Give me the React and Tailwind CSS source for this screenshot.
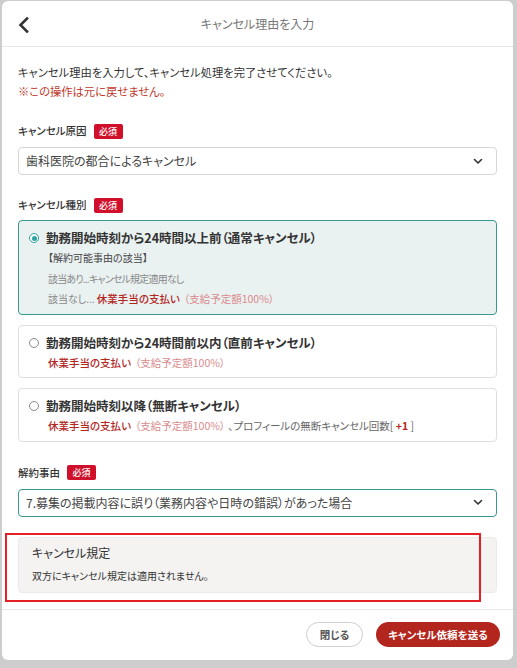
import React from "react";

const font = { fontFamily: '"Noto Sans CJK JP", "Noto Sans", sans-serif' };

function Badge() {
  return (
    <span className="ml-[7px] inline-flex h-[15px] w-[29px] items-center justify-center rounded-[2px] bg-[#d0102b] text-[9px] leading-none text-white">
      必須
    </span>
  );
}

function Label({ children }) {
  return (
    <div className="flex h-[20px] items-center text-[10.5px] font-medium leading-[20px] text-[#333]">
      <span>{children}</span>
      <Badge />
    </div>
  );
}

function Chevron() {
  return (
    <svg width="10" height="7" viewBox="0 0 10 7" className="shrink-0">
      <polyline points="1.5,1.5 5,5 8.5,1.5" fill="none" stroke="#333" strokeWidth="1.6" strokeLinecap="round" strokeLinejoin="round" />
    </svg>
  );
}

function Select({ value, active }) {
  return (
    <div
      className={
        "flex h-[28px] items-center justify-between rounded-[4px] border bg-white pl-[7px] pr-[13px] text-[12px] text-[#444] " +
        (active ? "border-[#3a9690]" : "border-[#d6d6d6]")
      }
    >
      <span>{value}</span>
      <Chevron />
    </div>
  );
}

function Radio({ checked }) {
  return checked ? (
    <span className="flex h-[10px] w-[10px] shrink-0 items-center justify-center rounded-full border-[1.5px] border-[#2fa3a0] bg-white">
      <span className="h-[5px] w-[5px] rounded-full bg-[#2fa3a0]" />
    </span>
  ) : (
    <span className="h-[10px] w-[10px] shrink-0 rounded-full border border-[#8a8a8a] bg-white" />
  );
}

function Pay() {
  return (
    <>
      <span className="text-[10.5px] font-medium text-[#b3261e]">休業手当の支払い</span>
      <span className="ml-[4px] text-[10.5px] text-[#d98a8c]">（支給予定額100%）</span>
    </>
  );
}

function Option({ checked, title, children }) {
  return (
    <div
      className={
        "rounded-[4px] border pb-[4px] pl-[10px] pr-3 pt-[7px] " +
        (checked ? "border-[#3a9690] bg-[#eaf1f1]" : "border-[#dedede] bg-white")
      }
    >
      <div className="flex h-[20px] items-center gap-[7px]">
        <Radio checked={checked} />
        <span className="text-[12.5px] font-bold leading-[20px] text-[#333]">{title}</span>
      </div>
      <div className="pl-[19px] text-[10px] leading-[20.5px] text-[#888]">{children}</div>
    </div>
  );
}

export default function App() {
  return (
    <div
      className="relative h-[668px] w-[517px] overflow-hidden bg-[#cdcdcd] pl-[2px] pt-[1px] [font-feature-settings:'palt']"
      style={font}
    >
      <div className="flex h-[659px] w-[511px] flex-col rounded-[6px] bg-white">
        {/* header */}
        <div className="relative flex h-[46px] shrink-0 items-center justify-center border-b border-[#e6e6e6]">
          <svg width="12" height="16" viewBox="0 0 12 16" className="absolute left-[16px] top-[16px]">
            <polyline points="9,1.5 2.5,8 9,14.5" fill="none" stroke="#333" strokeWidth="2.6" strokeLinecap="square" strokeLinejoin="miter" />
          </svg>
          <span className="text-[12px] text-[#777]">キャンセル理由を入力</span>
        </div>

        {/* body */}
        <div className="relative flex flex-1 flex-col px-4 pb-[16px] pt-[16px]">
          <div className="text-[11.3px] leading-[19px] text-[#333]">
            <p>キャンセル理由を入力して、キャンセル処理を完了させてください。</p>
            <p className="text-[#c0392b]">※この操作は元に戻せません。</p>
          </div>

          <div className="mt-[20px]">
            <Label>キャンセル原因</Label>
          </div>
          <div className="mt-[6px]">
            <Select value="歯科医院の都合によるキャンセル" />
          </div>

          <div className="mt-[20px]">
            <Label>キャンセル種別</Label>
          </div>
          <div className="mt-[5px] flex flex-col gap-[10px]">
            <Option checked title="勤務開始時刻から24時間以上前（通常キャンセル）">
              <div className="text-[#444]">【解約可能事由の該当】</div>
              <div className="tracking-[-0.8px]">該当あり...キャンセル規定適用なし</div>
              <div>
                該当なし... <Pay />
              </div>
            </Option>
            <Option title="勤務開始時刻から24時間前以内（直前キャンセル）">
              <div>
                <Pay />
              </div>
            </Option>
            <Option title="勤務開始時刻以降（無断キャンセル）">
              <div>
                <Pay />
                <span className="ml-[3px] text-[10.5px] text-[#666]">、プロフィールの無断キャンセル回数[ </span>
                <span className="text-[10.5px] font-bold text-[#b3261e]">+1</span>
                <span className="text-[10.5px] text-[#666]"> ]</span>
              </div>
            </Option>
          </div>

          <div className="mt-[21px]">
            <Label>解約事由</Label>
          </div>
          <div className="mt-[6px]">
            <Select active value="7.募集の掲載内容に誤り（業務内容や日時の錯誤）があった場合" />
          </div>

          <div className="relative mt-[20px]">
            <div className="rounded-[4px] border border-[#ebebeb] bg-[#f4f3f2] px-[13px] pb-[6px] pt-[5px] text-[#333]">
              <div className="text-[12px] leading-[20px]">キャンセル規定</div>
              <div className="mt-[3px] text-[10px] leading-[20px]">双方にキャンセル規定は適用されません。</div>
            </div>
            {/* highlight frame */}
            <div className="pointer-events-none absolute left-[-13px] top-[-4px] h-[69px] w-[476px] border-[2.5px] border-[#e32026]" />
          </div>
        </div>

        {/* footer */}
        <div className="flex h-[52px] shrink-0 items-center justify-end gap-[13px] border-t border-[#e8e8e8] pb-[1px] pr-[13px]">
          <button className="h-[25px] w-[57px] rounded-full border border-[#cfcfcf] bg-white text-[10.5px] font-bold text-[#555]">
            閉じる
          </button>
          <button className="h-[25px] w-[124px] rounded-full bg-[#b3261e] text-[10.5px] font-bold text-white">
            キャンセル依頼を送る
          </button>
        </div>
      </div>
    </div>
  );
}
